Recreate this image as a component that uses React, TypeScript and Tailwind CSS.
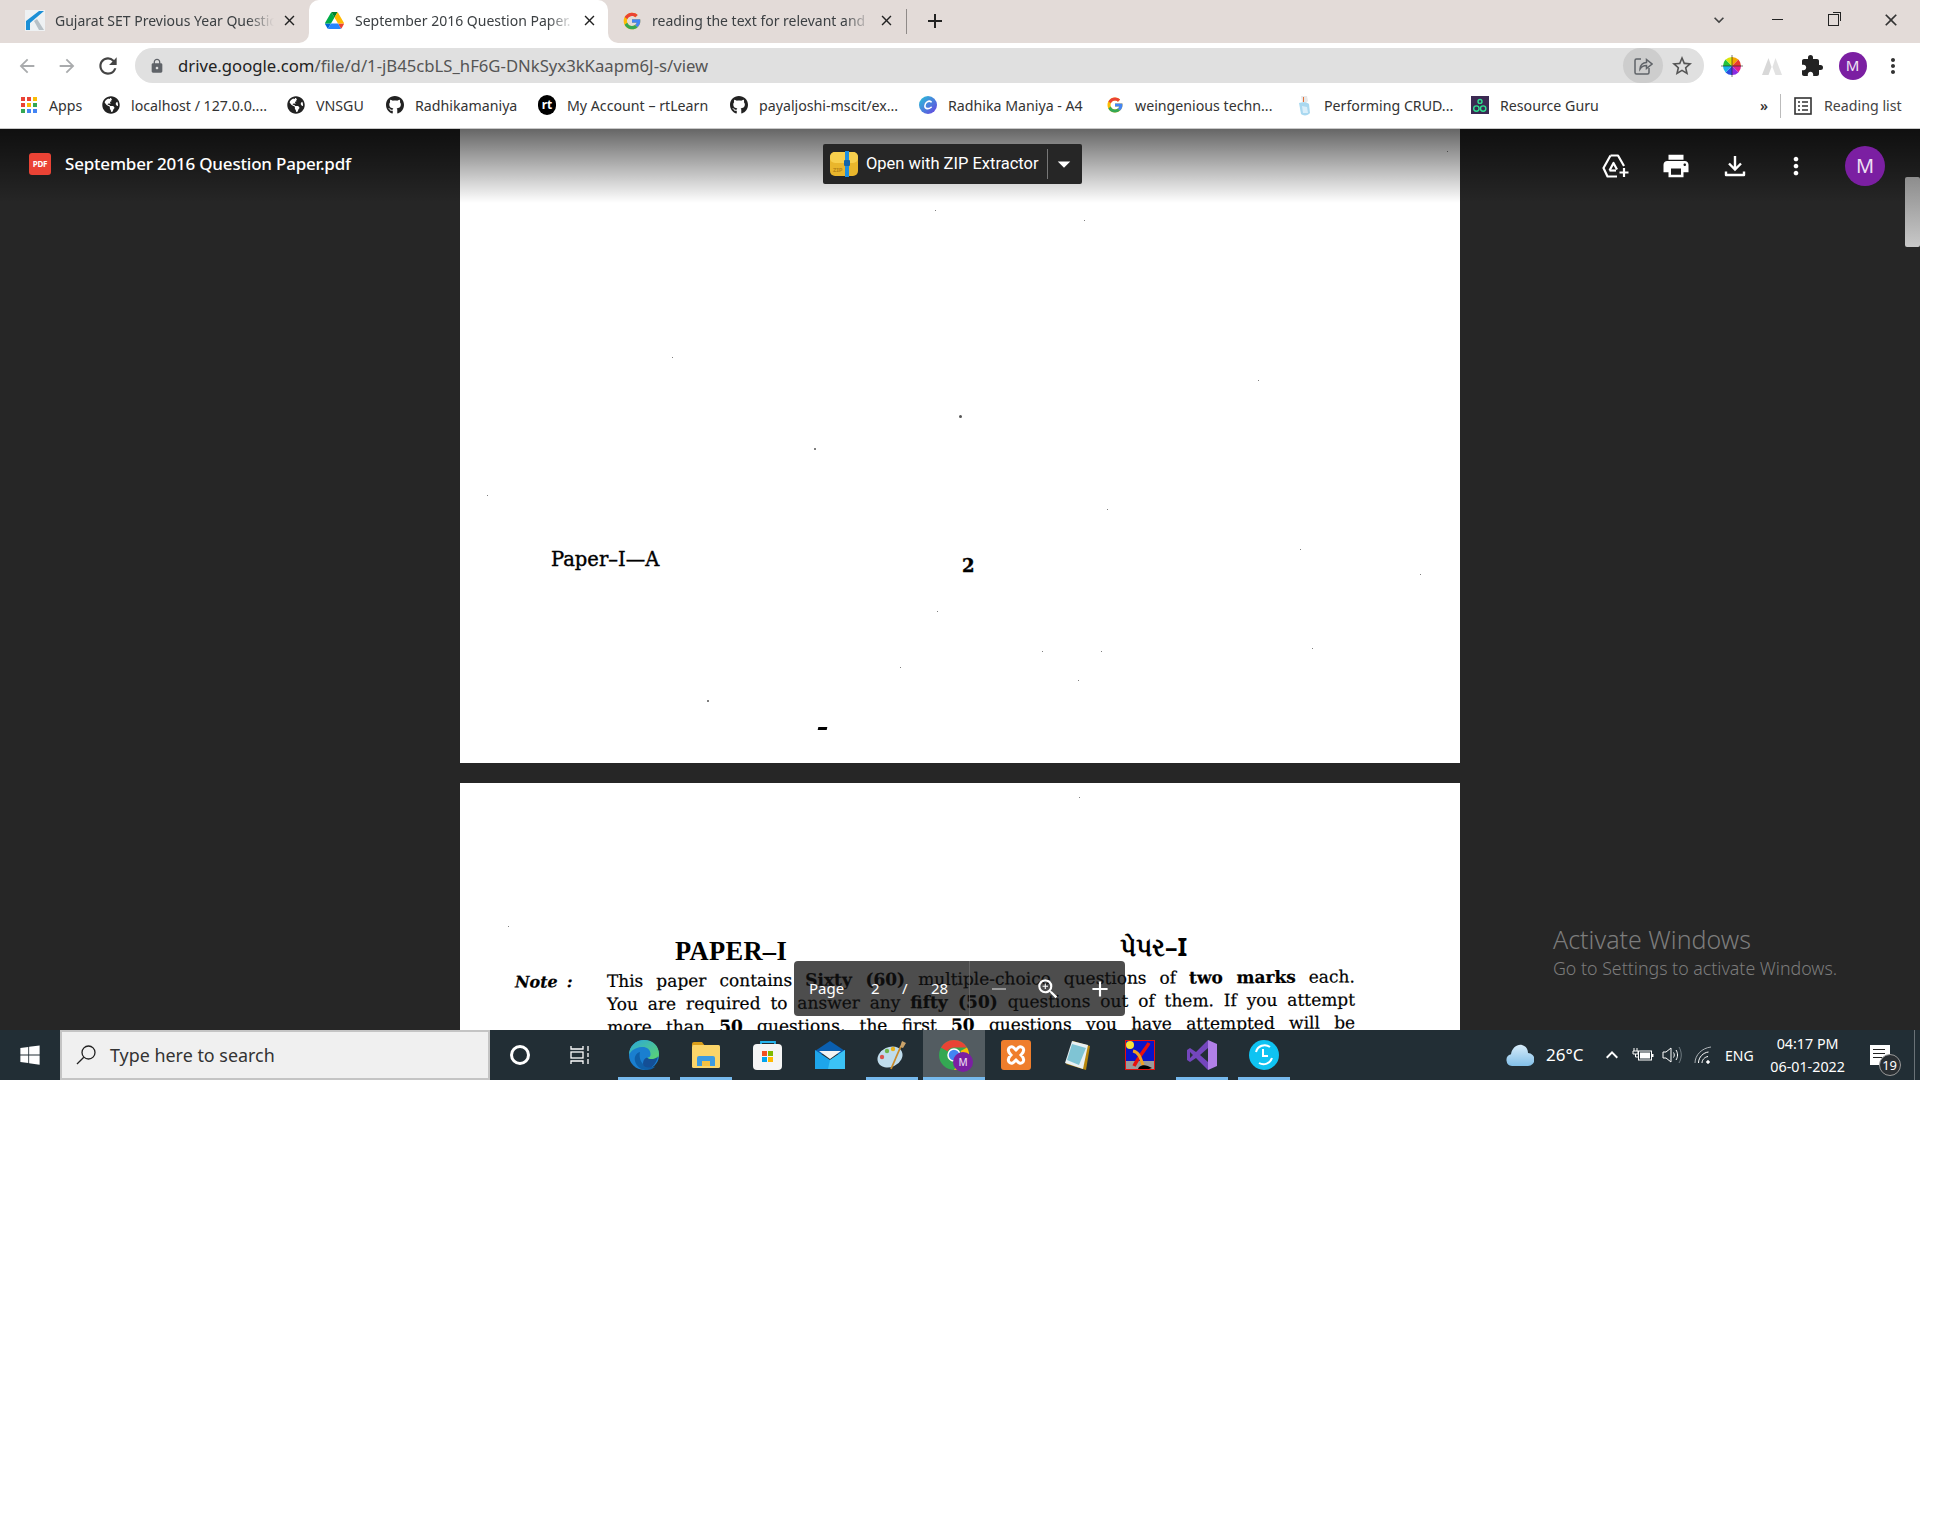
import { ReactNode } from "react";
import {
  FaGithub,
  FaGlobeAmericas,
  FaWindows,
} from "react-icons/fa";
import {
  MdArrowBack,
  MdArrowForward,
  MdArrowDropDown,
  MdClose,
  MdAdd,
  MdExtension,
  MdKeyboardArrowDown,
  MdLock,
  MdMoreVert,
  MdPrint,
  MdRefresh,
  MdRemove,
  MdStarBorder,
  MdZoomIn,
} from "react-icons/md";

function DriveLogo({ size = 18 }: { size?: number }) {
  return (
    <svg width={size} height={size} viewBox="0 0 87.3 78">
      <path d="m6.6 66.85 3.85 6.65c.8 1.4 1.95 2.5 3.3 3.3l13.75-23.8h-27.5c0 1.55.4 3.1 1.2 4.5z" fill="#0066da" />
      <path d="m43.65 25-13.75-23.8c-1.35.8-2.5 1.9-3.3 3.3l-25.4 44a9.06 9.06 0 0 0 -1.2 4.5h27.5z" fill="#00ac47" />
      <path d="m73.55 76.8c1.35-.8 2.5-1.9 3.3-3.3l1.6-2.75 7.65-13.25c.8-1.4 1.2-2.95 1.2-4.5h-27.502l5.852 11.5z" fill="#ea4335" />
      <path d="m43.65 25 13.75-23.8c-1.35-.8-2.9-1.2-4.5-1.2h-18.5c-1.6 0-3.15.45-4.5 1.2z" fill="#00832d" />
      <path d="m59.8 53h-32.3l-13.75 23.8c1.35.8 2.9 1.2 4.5 1.2h50.8c1.6 0 3.15-.45 4.5-1.2z" fill="#2684fc" />
      <path d="m73.4 26.5-12.7-22c-.8-1.4-1.95-2.5-3.3-3.3l-13.75 23.8 16.15 28h27.45c0-1.55-.4-3.1-1.2-4.5z" fill="#ffba00" />
    </svg>
  );
}

function GoogleLogo({ size = 18 }: { size?: number }) {
  return (
    <svg width={size} height={size} viewBox="0 0 48 48">
      <path d="M43.611 20.083H42V20H24v8h11.303c-1.649 4.657-6.08 8-11.303 8-6.627 0-12-5.373-12-12s5.373-12 12-12c3.059 0 5.842 1.154 7.961 3.039l5.657-5.657C34.046 6.053 29.268 4 24 4 12.955 4 4 12.955 4 24s8.955 20 20 20 20-8.955 20-20c0-1.341-.138-2.65-.389-3.917z" fill="#FBBC05" />
      <path d="M6.306 14.691l6.571 4.819C14.655 15.108 18.961 12 24 12c3.059 0 5.842 1.154 7.961 3.039l5.657-5.657C34.046 6.053 29.268 4 24 4 16.318 4 9.656 8.337 6.306 14.691z" fill="#EA4335" />
      <path d="M24 44c5.166 0 9.86-1.977 13.409-5.192l-6.19-5.238A11.91 11.91 0 0 1 24 36c-5.202 0-9.619-3.317-11.283-7.946l-6.522 5.025C9.505 39.556 16.227 44 24 44z" fill="#34A853" />
      <path d="M43.611 20.083H42V20H24v8h11.303a12.04 12.04 0 0 1-4.087 5.571l.003-.002 6.19 5.238C36.971 39.205 44 34 44 24c0-1.341-.138-2.65-.389-3.917z" fill="#4285F4" />
    </svg>
  );
}

function KLogo() {
  return (
    <svg width="20" height="21" viewBox="0 0 20 21">
      <rect width="20" height="21" fill="#eef1f3" />
      <path d="M1 11 14 1h5L5 13v6H1z" fill="#1b8fd6" />
      <path d="M1 13l4-1v8H1z" fill="#1b8fd6" />
      <path d="M9 11l3-2 7 11h-5z" fill="#b7c0c6" />
    </svg>
  );
}

function AppsIcon() {
  const colors = ["#ea4335", "#ea4335", "#fbbc05", "#ea4335", "#fbbc05", "#34a853", "#34a853", "#4285f4", "#4285f4"];
  return (
    <div className="grid h-[16px] w-[16px] grid-cols-3 gap-[2px]">
      {colors.map((c, i) => (
        <span key={i} style={{ background: c }} />
      ))}
    </div>
  );
}

function RtIcon() {
  return (
    <span className="flex h-[20px] w-[20px] items-center justify-center rounded-full bg-black text-[12px] font-bold leading-none text-white">
      rt
    </span>
  );
}

function CanvaIcon() {
  return (
    <svg width="20" height="20" viewBox="0 0 20 20">
      <defs>
        <linearGradient id="cv" x1="0" y1="0" x2="1" y2="1">
          <stop offset="0" stopColor="#27c4d8" />
          <stop offset="1" stopColor="#6a3fe0" />
        </linearGradient>
      </defs>
      <circle cx="10" cy="10" r="10" fill="url(#cv)" />
      <path d="M13.5 6.5C11 4.5 6.5 7 6.5 11c0 3.5 4 4 7 1.5" fill="none" stroke="#fff" strokeWidth="1.8" strokeLinecap="round" />
    </svg>
  );
}

function CrudIcon() {
  return (
    <svg width="16" height="22" viewBox="0 0 16 22">
      <path d="M5 1l6 0 1 5-2 2-4-1z" fill="#e8e8e8" />
      <path d="M7 2h1v5H7z" fill="#e2703a" />
      <path d="M3 8c3-1 8-1 10 1l1 9c-2 3-7 3-9 1z" fill="#a9d8f0" />
      <path d="M6 11l5 1 1 6-5 0z" fill="#d9eefa" />
    </svg>
  );
}

function GuruIcon() {
  return (
    <svg width="20" height="20" viewBox="0 0 20 20">
      <rect width="20" height="20" fill="#3b2a52" />
      <g fill="none" stroke="#2ee08f" strokeWidth="1.6">
        <circle cx="6" cy="14" r="3" />
        <circle cx="13.5" cy="14" r="3" />
        <circle cx="10" cy="6" r="2.2" />
      </g>
    </svg>
  );
}

function ReadingListIcon() {
  return (
    <svg width="18" height="18" viewBox="0 0 18 18" fill="none" stroke="#333" strokeWidth="1.6">
      <rect x="1" y="1" width="16" height="16" />
      <path d="M4 5h2M8 5h6M4 9h2M8 9h6M4 13h2M8 13h6" />
    </svg>
  );
}

function ColorWheel() {
  return (
    <svg width="24" height="24" viewBox="0 0 24 24">
      <path d="M12 12V3a9 9 0 0 1 6.4 2.6z" fill="#f5a500" />
      <path d="M12 12l6.4-6.4A9 9 0 0 1 21 12z" fill="#e63b2e" />
      <path d="M12 12h9a9 9 0 0 1-2.6 6.4z" fill="#e0218a" />
      <path d="M12 12l6.4 6.4A9 9 0 0 1 12 21z" fill="#8a2be2" />
      <path d="M12 12v9a9 9 0 0 1-6.4-2.6z" fill="#2b4de0" />
      <path d="M12 12l-6.4 6.4A9 9 0 0 1 3 12z" fill="#19b5e8" />
      <path d="M12 12H3a9 9 0 0 1 2.6-6.4z" fill="#22c33b" />
      <path d="M12 12L5.6 5.6A9 9 0 0 1 12 3z" fill="#d8e60e" />
      <path d="M12 1v22M1 12h22" stroke="#222" strokeWidth="0.6" />
    </svg>
  );
}

function PeakIcon() {
  return (
    <svg width="22" height="22" viewBox="0 0 22 22">
      <path d="M1 20 7.5 3l3 9-3 8z" fill="#d8d8d8" />
      <path d="M21 20 14.5 3l-3 9 3 8z" fill="#e2e2e2" />
    </svg>
  );
}

function ShareIcon() {
  return (
    <svg width="20" height="20" viewBox="0 0 20 20" fill="none" stroke="#5f6368" strokeWidth="1.5">
      <path d="M8 3H3.5A1.5 1.5 0 0 0 2 4.5v12A1.5 1.5 0 0 0 3.5 18h11a1.5 1.5 0 0 0 1.5-1.5V12" />
      <path d="M7 13c0-4 3-6.5 6.5-6.5V3.5L19 8l-5.500 4.500V9.500C11 9.500 8.500 10.500 7 13z" />
    </svg>
  );
}

function PdfIcon() {
  return (
    <span className="flex h-[22px] w-[22px] items-center justify-center rounded-[3px] bg-[#ea4335] text-[8px] font-bold leading-none text-white">
      PDF
    </span>
  );
}

function ZipIcon() {
  return (
    <svg width="28" height="26" viewBox="0 0 28 26">
      <rect y="1" width="28" height="24" rx="5" fill="#e9b62c" />
      <rect y="1" width="28" height="11" rx="5" fill="#f7cf4d" />
      <rect x="15" width="4" height="26" fill="#1d8fe0" />
      <rect x="14" y="9" width="6" height="6" rx="1" fill="#1565a8" />
      <text x="3" y="21" fontSize="6" fontWeight="700" fill="#b8871a">ZIP</text>
    </svg>
  );
}

function AddToDriveIcon() {
  return (
    <svg width="28" height="25" viewBox="0 0 28 25" fill="none" stroke="#fff" strokeWidth="2.200" strokeLinejoin="round">
      <path d="M8.500 1.500h7.500l6 10.500" />
      <path d="M8.500 1.500 1.500 14l4 8.500H15" />
      <path d="M7.500 16.500 11.500 9l3.500 6.500" />
      <path d="M7.500 16.500H14" />
      <path d="M22 14v9M17.500 18.500h9" />
    </svg>
  );
}

function DownloadIcon() {
  return (
    <svg width="24" height="24" viewBox="0 0 24 24" fill="none" stroke="#fff" strokeWidth="2.400">
      <path d="M12 2v13M6 9.500l6 6 6-6" />
      <path d="M3 17.500v3.500h18v-3.500" strokeLinejoin="round" />
    </svg>
  );
}

function EdgeIcon() {
  return (
    <svg width="32" height="32" viewBox="0 0 32 32">
      <defs>
        <linearGradient id="edge1" x1="0" y1="0" x2="1" y2="1">
          <stop offset="0" stopColor="#2aa7dc" />
          <stop offset="1" stopColor="#5fd66b" />
        </linearGradient>
      </defs>
      <circle cx="16" cy="16" r="15" fill="#1a7fd0" />
      <path d="M1 16C1 7 8 1 16 1c9 0 15 6 15 14 0 4-3 6-6.500 6-3 0-5-1-5-2.500 3 0 3-2 3-3.500C22.500 10 18 7.500 13.500 8 7 8.500 2.500 12 1 16z" fill="url(#edge1)" />
      <path d="M12 13c-4 1-6 5-5 9 1 5 6 9 11 9 4 0 7-1 9.500-3.500-3 1-9 1-12.500-2.500-3-3-4-8-3-12z" fill="#0f5fa8" />
      <path d="M19 18.500c2 2 7 2.500 11-1-1 4-3 8-6 10.500-3 1-8 1-9-3 0-3 1-5.500 4-6.500z" fill="#144f96" />
    </svg>
  );
}

function FolderIcon() {
  return (
    <svg width="28" height="26" viewBox="0 0 28 26">
      <path d="M0 2a2 2 0 0 1 2-2h8l3 4H0z" fill="#d99e1a" />
      <rect y="3" width="28" height="23" rx="1.500" fill="#fbd569" />
      <path d="M5 24V16a2 2 0 0 1 2-2h14a2 2 0 0 1 2 2v8h-5v-5h-8v5z" fill="#3d9be0" />
      <rect x="10" y="19" width="8" height="5" fill="#f5c242" />
    </svg>
  );
}

function StoreIcon() {
  return (
    <svg width="30" height="30" viewBox="0 0 30 30">
      <path d="M8 5V2h14v3" fill="none" stroke="#25b4ee" strokeWidth="1.800" />
      <rect y="4" width="29" height="26" rx="4" fill="#f5f5f5" />
      <rect x="9" y="11" width="5" height="5" fill="#f25022" />
      <rect x="15" y="11" width="5" height="5" fill="#7fba00" />
      <rect x="9" y="17" width="5" height="5" fill="#00a4ef" />
      <rect x="15" y="17" width="5" height="5" fill="#ffb900" />
    </svg>
  );
}

function MailIcon() {
  return (
    <svg width="30" height="30" viewBox="0 0 30 30">
      <path d="M15 1 30 11v3H0v-3z" fill="#0a5fb0" />
      <path d="M4 11h22l-11 8z" fill="#f4f4f4" />
      <path d="M0 10l15 10 15-10v19H0z" fill="#1ea5ea" />
      <path d="M15 20 30 10v19H13z" fill="#3bc2f5" />
    </svg>
  );
}

function PaletteIcon() {
  return (
    <svg width="30" height="30" viewBox="0 0 30 30">
      <ellipse cx="13" cy="17" rx="13" ry="10" fill="#bfdcec" transform="rotate(-25 13 17)" />
      <circle cx="5" cy="17" r="2.200" fill="#d9534f" />
      <circle cx="10" cy="11" r="2.200" fill="#6cb64b" />
      <circle cx="16" cy="9" r="2.200" fill="#e8b21e" />
      <path d="M14 29 24 6" stroke="#c98a2a" strokeWidth="1.800" />
      <path d="M23 7l2-6 4 2-3 5z" fill="#c9a26a" />
    </svg>
  );
}

function ChromeWithAvatar() {
  return (
    <div className="relative h-[30px] w-[30px]">
      <svg width="30" height="30" viewBox="0 0 30 30">
        <circle cx="15" cy="15" r="15" fill="#34a853" />
        <path d="M15 0a15 15 0 0 1 13 7.500H15A7.500 7.500 0 0 0 8.500 11.200L2 7.500A15 15 0 0 1 15 0z" fill="#ea4335" />
        <path d="M28 7.500A15 15 0 0 1 15 30l6.500-11.200A7.500 7.500 0 0 0 21.500 11z" fill="#fbbc05" />
        <circle cx="15" cy="15" r="6" fill="#4285f4" stroke="#fff" strokeWidth="1.500" />
      </svg>
      <span className="absolute bottom-[-2px] right-[-4px] flex h-[20px] w-[20px] items-center justify-center rounded-full bg-[#7b1fa2] text-[10px] font-medium text-[#e8d8f0]">
        M
      </span>
    </div>
  );
}

function XamppIcon() {
  return (
    <svg width="30" height="30" viewBox="0 0 30 30">
      <rect width="30" height="30" rx="3" fill="#ef7e2c" />
      <path d="M8 8c3-2 5 0 7 2 2-2 4-4 7-2 3 3 0 5-2 7 2 2 5 4 2 7-3 2-5 0-7-2-2 2-4 4-7 2-3-3 0-5 2-7-2-2-5-4-2-7z" fill="none" stroke="#fff" strokeWidth="3" transform="rotate(90 15 15)" />
    </svg>
  );
}

function NotepadIcon() {
  return (
    <svg width="28" height="30" viewBox="0 0 28 30">
      <path d="M9 1l17 5-4 24L2 24z" fill="#b8860b" />
      <path d="M8 1l16 4-5 24L1 23z" fill="#e8f0f2" />
      <path d="M8 4l14 4-7 17L3 20z" fill="#7fc4d4" />
    </svg>
  );
}

function XIcon() {
  return (
    <svg width="30" height="30" viewBox="0 0 30 30">
      <rect x="0.500" y="0.500" width="29" height="29" fill="#0a14c8" stroke="#e8100c" />
      <rect x="1" y="21" width="28" height="8" fill="#9a9a9a" />
      <circle cx="5" cy="5" r="4" fill="#f4e23a" />
      <path d="M9 26C14 16 20 10 24 3" stroke="#e8100c" strokeWidth="3.500" fill="none" />
      <path d="M8 11c6 1 8 8 10 14" stroke="#f2a020" strokeWidth="3" fill="none" />
      <path d="M14 27c4-3 8-2 13 1l-3 1H13z" fill="#000" />
    </svg>
  );
}

function VsIcon() {
  return (
    <svg width="30" height="30" viewBox="0 0 30 30">
      <path d="M21 0l9 4v22l-9 4z" fill="#b180e8" />
      <path fillRule="evenodd" d="M21 0 9 12 3 8 0 10v10l3 2 6-4 12 12v-8l-8-7 8-7zM3 12l3 3-3 3z" fill="#7446bd" />
    </svg>
  );
}

function ClockAppIcon() {
  return (
    <svg width="30" height="30" viewBox="0 0 30 30" fill="none">
      <circle cx="15" cy="15" r="15" fill="#0fc3f2" />
      <path d="M7 12a9 9 0 0 1 14-5M23 18a9 9 0 0 1-13 5" stroke="#fff" strokeWidth="2" />
      <path d="M14 9v7h5" stroke="#fff" strokeWidth="2" />
    </svg>
  );
}

function Cortana() {
  return <span className="h-[20px] w-[20px] rounded-full border-[3px] border-white" />;
}

function TaskView() {
  return (
    <svg width="20" height="20" viewBox="0 0 20 20" fill="none" stroke="#fff" strokeWidth="1.300">
      <path d="M1 1v3h12V1M1 19v-3h12v3" />
      <rect x="1" y="7" width="12" height="6" />
      <path d="M18 1v5M18 8v4M18 14v5" />
    </svg>
  );
}

function SearchGlass() {
  return (
    <svg width="22" height="22" viewBox="0 0 22 22" fill="none" stroke="#222" strokeWidth="1.300">
      <circle cx="13.500" cy="8.500" r="6.500" />
      <path d="M8.800 13.200 2 20" />
    </svg>
  );
}

function Cloud() {
  return (
    <svg width="28" height="22" viewBox="0 0 28 22">
      <defs>
        <linearGradient id="cl" x1="0" y1="0" x2="0" y2="1">
          <stop offset="0" stopColor="#d7ecfa" />
          <stop offset="1" stopColor="#82bfe8" />
        </linearGradient>
      </defs>
      <path d="M6 22a6 6 0 0 1-1-11.800C6 4 11 0 16 1c4 1 6 4 6 8a6.500 6.500 0 0 1 0 13z" fill="url(#cl)" />
    </svg>
  );
}

function BatteryPlug() {
  return (
    <svg width="22" height="14" viewBox="0 0 22 14">
      <path d="M2 0v3M5 0v3M1 3h5v3H1zM3.500 6v3H6" stroke="#fff" strokeWidth="1" fill="none" />
      <rect x="6.500" y="3" width="13" height="9" fill="none" stroke="#fff" />
      <rect x="8" y="4.500" width="10" height="6" fill="#fff" />
      <rect x="20" y="6" width="1.500" height="3" fill="#fff" />
    </svg>
  );
}

function Speaker() {
  return (
    <svg width="20" height="20" viewBox="0 0 20 20" fill="none" stroke="#fff" strokeWidth="1">
      <path d="M1 7h3l5-4v14l-5-4H1z" />
      <path d="M11.500 7.500c1 1.500 1 3.500 0 5" />
      <path d="M14 5c2 3 2 7 0 10" />
      <path d="M17 2c3 5 3 11 0 16" stroke="#6f7a80" />
    </svg>
  );
}

function WifiArcs() {
  return (
    <svg width="18" height="18" viewBox="0 0 18 18" fill="none" stroke="#fff" strokeWidth="1">
      <path d="M1 17C1 9 8 2 17 1" stroke="#aeb4b8" />
      <path d="M4.500 17c0-6 5-10.500 10-11" />
      <path d="M8 17c0-3 2.500-6 6-6.500" />
      <circle cx="14" cy="16" r="1.300" fill="#fff" />
    </svg>
  );
}

const tabs: { title: string; icon: ReactNode; w: string; active?: boolean }[] = [
  { title: "Gujarat SET Previous Year Questio", icon: <KLogo />, w: "w-[309px] pl-[25px]" },
  { title: "September 2016 Question Paper.", icon: <DriveLogo size={19} />, w: "w-[299px] pl-[16px]", active: true },
  { title: "reading the text for relevant and", icon: <GoogleLogo size={20} />, w: "w-[298px] pl-[14px]" },
];

const bookmarks: { label: string; icon: ReactNode; w: string }[] = [
  { label: "Apps", icon: <AppsIcon />, w: "w-[82px]" },
  { label: "localhost / 127.0.0....", icon: <FaGlobeAmericas size={18} color="#222" />, w: "w-[185px]" },
  { label: "VNSGU", icon: <FaGlobeAmericas size={18} color="#222" />, w: "w-[99px]" },
  { label: "Radhikamaniya", icon: <FaGithub size={20} color="#222" />, w: "w-[152px]" },
  { label: "My Account – rtLearn", icon: <RtIcon />, w: "w-[192px]" },
  { label: "payaljoshi-mscit/ex...", icon: <FaGithub size={20} color="#222" />, w: "w-[189px]" },
  { label: "Radhika Maniya - A4", icon: <CanvaIcon />, w: "w-[187px]" },
  { label: "weingenious techn...", icon: <GoogleLogo size={18} />, w: "w-[189px]" },
  { label: "Performing CRUD...", icon: <CrudIcon />, w: "w-[176px]" },
  { label: "Resource Guru", icon: <GuruIcon />, w: "w-[130px]" },
];

const pinned: { icon: ReactNode; open?: boolean; hover?: boolean }[] = [
  { icon: <EdgeIcon />, open: true },
  { icon: <FolderIcon />, open: true },
  { icon: <StoreIcon /> },
  { icon: <MailIcon /> },
  { icon: <PaletteIcon />, open: true },
  { icon: <ChromeWithAvatar />, open: true, hover: true },
  { icon: <XamppIcon /> },
  { icon: <NotepadIcon /> },
  { icon: <XIcon /> },
  { icon: <VsIcon />, open: true },
  { icon: <ClockAppIcon />, open: true },
];

// dust on the scanned pages, in px from the page's top left corner
const pageOneSpecks = [
  [475, 81, 1], [624, 91, 1], [212, 228, 1], [798, 251, 1], [499, 286, 3], [354, 319, 2],
  [27, 366, 1], [647, 380, 1], [840, 420, 1], [960, 445, 1], [477, 482, 1], [582, 522, 1],
  [641, 522, 1], [852, 519, 1], [440, 538, 1], [618, 551, 1], [247, 571, 2], [987, 22, 1],
];

const pageTwoSpecks = [
  [619, 14, 1], [48, 143, 1],
];

function Speck({ x, y, s }: { x: number; y: number; s: number }) {
  return (
    <span
      className="absolute rounded-full bg-[#555]"
      style={{ left: x, top: y, width: s, height: s }}
    />
  );
}

export default function App() {
  return (
    <div className="h-[1536px] w-[1936px] bg-white font-['Noto_Sans',sans-serif]">
      <div className="flex h-[1080px] w-[1920px] flex-col overflow-hidden">
        {/* tab strip */}
        <div className="flex h-[43px] shrink-0 items-stretch bg-[#e3dbd8]">
          {tabs.map((t) => (
            <div
              key={t.title}
              className={`relative flex items-center pb-[2px] ${t.w} ${t.active ? "rounded-t-[10px] bg-white" : ""}`}
            >
              {t.active && (
                <>
                  <span className="absolute bottom-0 left-[-10px] h-[10px] w-[10px] bg-white">
                    <span className="block h-full w-full rounded-br-[10px] bg-[#e3dbd8]" />
                  </span>
                  <span className="absolute bottom-0 right-[-10px] h-[10px] w-[10px] bg-white">
                    <span className="block h-full w-full rounded-bl-[10px] bg-[#e3dbd8]" />
                  </span>
                </>
              )}
              <span className="flex w-[30px] shrink-0 items-center">{t.icon}</span>
              <span className="w-[219px] overflow-hidden whitespace-nowrap text-[14px] text-[#3c4043] [mask-image:linear-gradient(to_right,black_88%,transparent)]">
                {t.title}
              </span>
              <MdClose size={17} className="ml-[7px] text-[#222]" />
            </div>
          ))}
          <span className="my-[9px] w-px bg-[#8f8a88]" />
          <span className="ml-[16px] flex items-center pb-[2px]">
            <MdAdd size={24} className="text-[#222]" />
          </span>
          <div className="ml-auto flex items-center pb-[4px] text-[#444]">
            <MdKeyboardArrowDown size={20} className="mr-[43px]" />
            <span className="mr-[45px] h-px w-[11px] bg-[#222]" />
            <span className="relative mr-[42px] block h-[12px] w-[11px] border border-[#222]">
              <span className="absolute right-[-3px] top-[-3px] h-[9px] w-[8px] border-r border-t border-[#222]" />
            </span>
            <MdClose size={20} className="mr-[19px] text-[#333]" />
          </div>
        </div>

        {/* omnibox row */}
        <div className="flex h-[47px] shrink-0 items-start bg-white pl-[7px] pt-[5px]">
          <span className="flex h-[35px] w-[40px] items-center justify-center"><MdArrowBack size={22} className="text-[#a9abad]" /></span>
          <span className="flex h-[35px] w-[40px] items-center justify-center"><MdArrowForward size={22} className="text-[#a9abad]" /></span>
          <span className="flex h-[35px] w-[41px] items-center justify-center"><MdRefresh size={26} className="text-[#444]" /></span>
          <div className="ml-[7px] flex h-[35px] w-[1569px] items-center rounded-full bg-[#e0e0e0] pl-[14px] pr-[10px]">
            <MdLock size={16} className="text-[#5f6368]" />
            <span className="ml-[13px] text-[16.7px] text-[#555]">
              <span className="text-[#222]">drive.google.com</span>/file/d/1-jB45cbLS_hF6G-DNkSyx3kKaapm6J-s/view
            </span>
            <span className="ml-auto flex h-[35px] w-[40px] items-center justify-center rounded-full bg-[#cdcdcd]">
              <ShareIcon />
            </span>
            <MdStarBorder size={24} className="ml-[7px] text-[#555]" />
          </div>
          <span className="ml-[8px] flex h-[35px] w-[40px] items-center justify-center"><ColorWheel /></span>
          <span className="flex h-[35px] w-[40px] items-center justify-center"><PeakIcon /></span>
          <span className="flex h-[35px] w-[40px] items-center justify-center"><MdExtension size={24} className="text-[#222]" /></span>
          <span className="flex h-[35px] w-[41px] items-center justify-center">
            <span className="flex h-[28px] w-[28px] items-center justify-center rounded-full bg-[#7b1fa2] text-[15px] text-[#f0e4f5]">M</span>
          </span>
          <span className="flex h-[35px] w-[40px] items-center justify-center"><MdMoreVert size={24} className="text-[#333]" /></span>
        </div>

        {/* bookmarks */}
        <div className="flex h-[39px] shrink-0 items-center border-b border-[#c8c8c8] bg-white pb-[7px] pl-[20px]">
          {bookmarks.map((b) => (
            <div key={b.label} className={`flex items-center ${b.w}`}>
              <span className="flex w-[18px] shrink-0 justify-center">{b.icon}</span>
              <span className="ml-[11px] whitespace-nowrap text-[14.2px] text-[#333]">{b.label}</span>
            </div>
          ))}
          <span className="ml-[159px] text-[14px] font-semibold text-[#333]">»</span>
          <span className="ml-[12px] h-[24px] w-px bg-[#bbb]" />
          <span className="ml-[13px]"><ReadingListIcon /></span>
          <span className="ml-[12px] whitespace-nowrap text-[14.2px] text-[#444]">Reading list</span>
        </div>

        {/* drive viewer */}
        <div className="relative flex-1 overflow-hidden bg-[#262626]">
          <div className="flex flex-col items-center">
            <div className="relative h-[634px] w-[1000px] bg-white pl-[91px] pt-[416px] font-['DejaVu_Serif',serif] text-black">
              {pageOneSpecks.map(([x, y, s], i) => (
                <Speck key={i} x={x} y={y} s={s} />
              ))}
              <span className="absolute left-[358px] top-[598px] h-[3px] w-[9px] -skew-x-12 bg-black" />
              <div className="flex items-start text-[19.5px] [-webkit-text-stroke:0.4px]">
                <span className="w-[411px] whitespace-nowrap">Paper–I—A</span>
                <span className="mt-[7px] text-[18px] font-bold">2</span>
              </div>
            </div>
            <div className="relative mt-5 h-[300px] w-[1000px] bg-white pt-[149px] font-['Liberation_Serif',serif] text-black">
              {pageTwoSpecks.map(([x, y, s], i) => (
                <Speck key={i} x={x} y={y} s={s} />
              ))}
              <div className="flex items-start pl-[215px] text-[26.5px] font-bold">
                <span className="w-[445px] tracking-[0.3px]">PAPER–I</span>
                <span className="mt-[-4px] font-['Noto_Sans',sans-serif] text-[25px]">પેપર–I</span>
              </div>
              <div className="ml-[55px] mt-[-4px] flex w-[840px] rotate-[-0.35deg] items-start font-['DejaVu_Serif',serif] text-[17px] leading-[23px] [-webkit-text-stroke:0.2px]">
                <div className="flex w-[92px] shrink-0 gap-[9px] text-[16px] font-bold italic">
                  <span>Note</span>
                  <span>:</span>
                </div>
                <div className="w-[748px]">
                  <p className="text-justify [text-align-last:justify]">
                    This paper contains <b>Sixty (60)</b> multiple-choice questions of <b>two marks</b> each.
                  </p>
                  <p className="text-justify [text-align-last:justify]">
                    You are required to answer any <b>fifty (50)</b> questions out of them. If you attempt
                  </p>
                  <p className="text-justify [text-align-last:justify]">
                    more than <b>50</b> questions, the first <b>50</b> questions you have attempted will be
                  </p>
                </div>
              </div>
            </div>
          </div>

          {/* viewer header, over the pages */}
          <div className="absolute inset-x-0 top-0 flex h-[74px] items-center bg-gradient-to-b from-black/60 to-transparent">
            <div className="mt-[-4px] flex w-[823px] items-center pl-[29px] text-[17px] font-medium tracking-[-0.2px] text-white">
              <PdfIcon />
              <span className="ml-[14px]">September 2016 Question Paper.pdf</span>
            </div>
            <div className="mt-[-4px] flex h-[40px] w-[259px] items-center rounded-[2px] bg-[#262626] pl-[7px] text-white">
              <ZipIcon />
              <span className="ml-[8px] mt-[1px] w-[181px] whitespace-nowrap font-['Roboto',sans-serif] text-[16.5px]">Open with ZIP Extractor</span>
              <span className="h-[30px] w-px bg-[#777]" />
              <MdArrowDropDown size={30} className="ml-[1px]" />
            </div>
            <div className="ml-[514px] flex w-[40px] justify-center"><AddToDriveIcon /></div>
            <div className="ml-[20px] flex w-[40px] justify-center"><MdPrint size={30} className="text-white" /></div>
            <div className="ml-[19px] flex w-[40px] justify-center"><DownloadIcon /></div>
            <div className="ml-[21px] flex w-[40px] justify-center"><MdMoreVert size={28} className="text-white" /></div>
            <span className="ml-[29px] flex h-[40px] w-[40px] items-center justify-center rounded-full bg-[#7b1fa2] text-[20px] text-[#ecdff2]">M</span>
          </div>

          {/* scrollbar thumb */}
          <span className="absolute right-0 top-[48px] h-[70px] w-[15px] rounded-[2px] bg-gradient-to-b from-[#8d8d8d] to-[#c8c8c8]" />

          {/* page controls */}
          <div className="absolute left-[794px] top-[832px] flex h-[55px] w-[331px] items-center rounded-[4px] bg-[#111]/75 text-[15px] text-white">
            <div className="flex h-full w-[176px] items-center border-r border-[#777]/60 pl-[15px]">
              <span className="w-[62px]">Page</span>
              <span className="w-[31px]">2</span>
              <span className="w-[29px]">/</span>
              <span>28</span>
            </div>
            <MdRemove size={24} className="ml-[17px] text-[#999]" />
            <MdZoomIn size={26} className="ml-[24px]" />
            <MdAdd size={26} className="ml-[26px]" />
          </div>

          {/* activation watermark */}
          <div className="absolute left-[1553px] top-[795px] text-[#7c7c7c]">
            <div className="text-[25px] font-light leading-[30px]">Activate Windows</div>
            <div className="mt-[1px] text-[17.8px] font-light leading-[26px]">Go to Settings to activate Windows.</div>
          </div>
        </div>

        {/* windows taskbar */}
        <div className="flex h-[50px] shrink-0 items-stretch bg-[#222e35]">
          <div className="flex w-[60px] items-center justify-center text-white">
            <FaWindows size={22} />
          </div>
          <div className="flex w-[430px] items-center border-2 border-[#c4c4c4] bg-[#f0f0f0] pl-[13px] text-[17.9px] text-[#333]">
            <SearchGlass />
            <span className="ml-[13px]">Type here to search</span>
          </div>
          <div className="flex w-[60px] items-center justify-center"><Cortana /></div>
          <div className="flex w-[60px] items-center justify-center"><TaskView /></div>
          <div className="ml-[3px] flex">
            {pinned.map((p, i) => (
              <div
                key={i}
                className={`relative flex w-[62px] items-center justify-center ${p.hover ? "bg-[#535c61]" : ""}`}
              >
                {p.icon}
                {p.open && (
                  <span className={`absolute bottom-0 h-[3px] bg-[#76b9ed] ${p.hover ? "inset-x-0" : "inset-x-[5px]"}`} />
                )}
              </div>
            ))}
          </div>
          <div className="ml-[211px] flex flex-1 items-center text-white">
            <Cloud />
            <span className="ml-[12px] w-[38px] whitespace-nowrap text-[17px]">26°C</span>
            <MdKeyboardArrowDown size={24} className="ml-[16px] rotate-180" />
            <span className="ml-[8px]"><BatteryPlug /></span>
            <span className="ml-[8px]"><Speaker /></span>
            <span className="ml-[12px]"><WifiArcs /></span>
            <span className="ml-[13px] text-[14px]">ENG</span>
            <div className="ml-[16px] w-[76px] whitespace-nowrap text-center text-[14.3px] leading-[23px]">
              <div>04:17 PM</div>
              <div>06-01-2022</div>
            </div>
            <div className="relative ml-[24px] h-[20px] w-[20px] bg-white">
              <span className="absolute left-[3px] top-[4px] h-px w-[12px] bg-[#222]" />
              <span className="absolute left-[3px] top-[8px] h-px w-[12px] bg-[#222]" />
              <span className="absolute left-[3px] top-[12px] h-px w-[9px] bg-[#222]" />
              <span className="absolute left-[9px] top-[9px] flex h-[22px] w-[22px] items-center justify-center rounded-full border border-[#999] bg-[#2a2f33] text-[13px] leading-none">
                19
              </span>
            </div>
            <span className="ml-auto mr-[5px] w-px self-stretch bg-[#6a7277]" />
          </div>
        </div>
      </div>
    </div>
  );
}
